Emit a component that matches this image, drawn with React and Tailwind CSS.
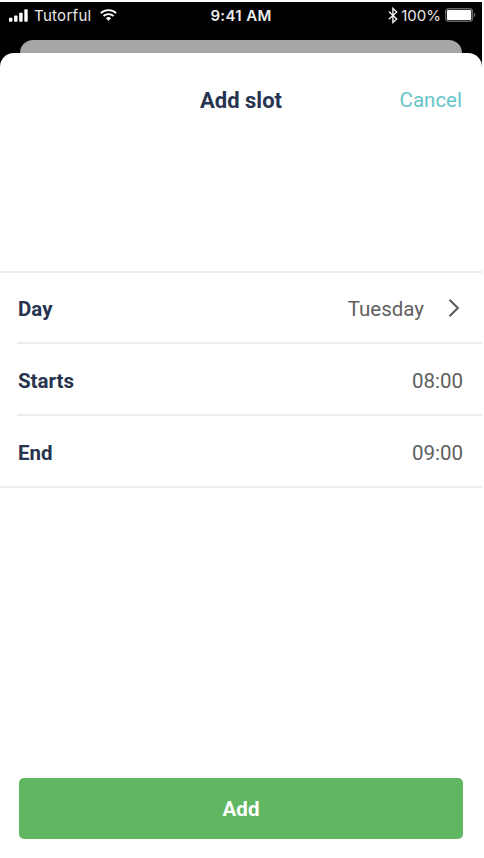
const slotRows = [
  { label: 'Day', value: 'Tuesday', hasArrow: true },
  { label: 'Starts', value: '08:00' },
  { label: 'End', value: '09:00' },
]

function SignalIcon() {
  return (
    <svg width="19" height="13" viewBox="0 0 19 13" fill="#fff" aria-hidden="true">
      <rect x="0" y="8.8" width="3.4" height="4" rx="0.7" />
      <rect x="5.1" y="6.6" width="3.4" height="6.2" rx="0.7" />
      <rect x="10.2" y="3.8" width="3.4" height="9" rx="0.7" />
      <rect x="15.3" y="0.3" width="3.4" height="12.5" rx="0.7" />
    </svg>
  )
}

function WifiIcon() {
  return (
    <svg width="17" height="12" viewBox="0 0 17 12" fill="none" stroke="#fff" aria-hidden="true">
      <path d="M0.8 4.1a11.5 11.5 0 0 1 15.4 0" strokeWidth="1.8" />
      <path d="M3.5 7a7.4 7.4 0 0 1 10 0" strokeWidth="1.8" />
      <path d="M8.5 11.8 5.9 9.2a3.7 3.7 0 0 1 5.2 0z" fill="#fff" stroke="none" />
    </svg>
  )
}

function BluetoothIcon() {
  return (
    <svg width="10" height="17" viewBox="0 0 10 17" fill="none" stroke="#eee" strokeWidth="1.4" aria-hidden="true">
      <path d="M0.9 4.6 8.7 11.9 4.9 15.4V1.4L8.7 4.9 0.9 12.2" />
    </svg>
  )
}

function BatteryIcon() {
  return (
    <svg width="32" height="14" viewBox="0 0 32 14" aria-hidden="true">
      <rect x="0.7" y="0.7" width="26.8" height="12.6" rx="3" fill="none" stroke="#666" strokeWidth="1.4" />
      <rect x="2" y="2" width="24.2" height="10" rx="1.3" fill="#fff" />
      <path d="M29.1 4.8c1.7.7 1.7 3.7 0 4.4z" fill="#777" />
    </svg>
  )
}

function StatusBar() {
  return (
    <div className="grid h-[38px] grid-cols-3 pt-[3px] font-['Inter',sans-serif] text-[15px] leading-[19px] text-white">
      <div className="flex h-[20px] items-center pl-[9px]">
        <SignalIcon />
        <span className="ml-[6px] text-[#e8e8e8] tracking-[0.3px]">Tutorful</span>
        <span className="ml-[8px]">
          <WifiIcon />
        </span>
      </div>
      <div className="pt-px text-center text-[15px] font-semibold tracking-[0.35px] text-[#eee]">9:41 AM</div>
      <div className="flex h-[20px] items-center justify-end pr-[5px]">
        <BluetoothIcon />
        <span className="mr-[4px] ml-[3px] text-[#e8e8e8]">100%</span>
        <BatteryIcon />
      </div>
    </div>
  )
}

function SlotRow({ label, value, hasArrow, isLast }) {
  return (
    <div className={isLast ? '' : 'pl-[17px]'}>
      <div
        className={`flex items-center border-b-2 border-[#ececec] pr-[19px] text-[20.5px] ${
          hasArrow ? 'h-[71px] pt-[3px]' : 'h-[72px] pt-[4px]'
        } ${isLast ? 'pl-[18px]' : 'pl-px'}`}
      >
        <span className="flex-1 font-bold text-[#27344f]">{label}</span>
        <span className="text-[#606060]">{value}</span>
        {hasArrow && (
          <svg className="mr-[3px] mb-[2px] ml-[24px]" width="12" height="20" viewBox="0 0 12 20" fill="none" aria-hidden="true">
            <path d="m1.5 1.8 8.3 8.2-8.3 8.2" stroke="#606060" strokeWidth="2.2" />
          </svg>
        )}
      </div>
    </div>
  )
}

export default function App() {
  return (
    <div className="h-[858px] w-[484px] bg-white pt-[2px] font-['Roboto',sans-serif]">
      <div className="flex h-[856px] w-[482px] flex-col bg-black">
        <StatusBar />
        <div className="mx-[20px] h-[13px] rounded-t-[13px] bg-[#a6a6a6]" />
        <main className="flex flex-1 flex-col rounded-t-[14px] bg-white">
          <header className="grid h-[218px] grid-cols-3 items-start px-[20px] pt-[35px] leading-[24px]">
            <span />
            <h1 className="pt-px text-center text-[22px] font-bold text-[#27344f]">Add slot</h1>
            <button type="button" className="text-right text-[20.5px] text-[#65c5c9]">
              Cancel
            </button>
          </header>
          <section className="border-t-2 border-[#ececec]">
            {slotRows.map((row, index) => (
              <SlotRow key={row.label} {...row} isLast={index === slotRows.length - 1} />
            ))}
          </section>
          <div className="mt-auto px-[19px] pb-[19px]">
            <button
              type="button"
              className="h-[61px] w-full rounded-[5px] bg-[#61b661] pt-px text-[20.5px] font-bold text-white"
            >
              Add
            </button>
          </div>
        </main>
      </div>
    </div>
  )
}
